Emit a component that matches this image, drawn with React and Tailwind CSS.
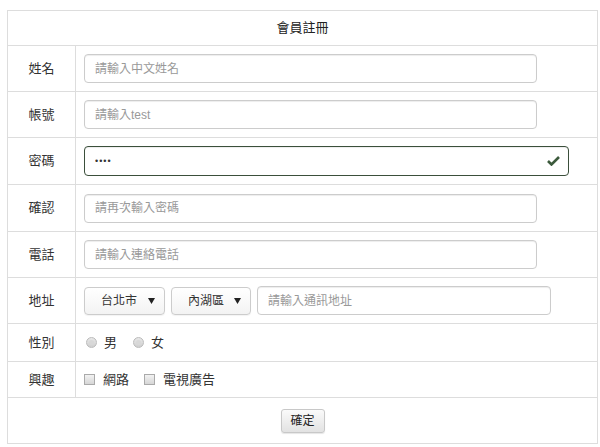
import React from 'react'

const font = { fontFamily: '"Liberation Sans", "Noto Sans CJK TC", sans-serif' }

function Row({ label, h, children }) {
  return (
    <div className={`flex border-b border-[#ddd] ${h}`}>
      <div className="w-[68px] shrink-0 border-r border-[#ddd] flex items-center justify-center text-[13px] text-[#333]">
        {label}
      </div>
      <div className="flex-1 flex items-center pl-[8px]">{children}</div>
    </div>
  )
}

function TextInput({ placeholder, w = 'w-[453px]' }) {
  return (
    <input
      type="text"
      placeholder={placeholder}
      className={`${w} h-[29px] rounded-[4px] border border-[#ccc] bg-white px-[10px] text-[12px] text-[#555] placeholder:text-[#999] shadow-[inset_0_1px_1px_rgba(0,0,0,0.075)] outline-none`}
      style={font}
    />
  )
}

function Select({ value, w }) {
  return (
    <div className={`${w} h-[28px] rounded-[4px] border border-[#ccc] bg-gradient-to-b from-white to-[#f3f3f3] shadow-[0_1px_1px_rgba(0,0,0,0.05)] flex items-center justify-between pl-[16px] pr-[9px] text-[12px] text-[#333]`}>
      <span>{value}</span>
      <svg width="7" height="6" viewBox="0 0 7 6">
        <path d="M0 0 H7 L3.5 6 Z" fill="#222" />
      </svg>
    </div>
  )
}

function Radio({ label }) {
  return (
    <label className="flex items-center gap-[7px] mr-[16px] text-[13px] text-[#333]">
      <span className="w-[11px] h-[11px] rounded-full border border-[#bbb] bg-gradient-to-b from-[#e8e8e8] to-[#cfcfcf] flex items-center justify-center">
        <span className="w-[5px] h-[5px] rounded-full bg-[#d8d8d8]" />
      </span>
      {label}
    </label>
  )
}

function Check({ label }) {
  return (
    <label className="flex items-center gap-[8px] mr-[15px] text-[13px] text-[#333]">
      <span className="w-[11px] h-[11px] border border-[#aaa] bg-gradient-to-b from-[#f2f2f2] to-[#d6d6d6]" />
      {label}
    </label>
  )
}

export default function App() {
  return (
    <div className="w-[600px] h-[447px] bg-white pt-[10px] pl-[7px]" style={font}>
      <div className="w-[591px] border border-[#ddd]">
        <div className="h-[35px] border-b border-[#ddd] flex items-center justify-center text-[13px] text-[#222]">
          會員註冊
        </div>
        <Row label="姓名" h="h-[46px]">
          <TextInput placeholder="請輸入中文姓名" />
        </Row>
        <Row label="帳號" h="h-[46px]">
          <TextInput placeholder="請輸入test" />
        </Row>
        <Row label="密碼" h="h-[47px]">
          <div className="relative w-[485px] h-[30px]">
            <input
              type="password"
              defaultValue="test"
              className="w-full h-full rounded-[4px] border border-[#3b4f3b] bg-white px-[10px] text-[9px] tracking-[1px] text-[#333] shadow-[inset_0_1px_1px_rgba(0,0,0,0.075)] outline-none"
              style={font}
            />
            <svg className="absolute right-[9px] top-[9px]" width="13" height="11" viewBox="0 0 13 11">
              <path d="M1 6 L4.5 9.5 L12 2" fill="none" stroke="#3c5a3c" strokeWidth="2.6" />
            </svg>
          </div>
        </Row>
        <Row label="確認" h="h-[47px]">
          <TextInput placeholder="請再次輸入密碼" />
        </Row>
        <Row label="電話" h="h-[46px]">
          <TextInput placeholder="請輸入連絡電話" />
        </Row>
        <Row label="地址" h="h-[46px]">
          <div className="flex items-center gap-[6px]">
            <Select value="台北市" w="w-[81px]" />
            <Select value="內湖區" w="w-[80px]" />
            <TextInput placeholder="請輸入通訊地址" w="w-[294px]" />
          </div>
        </Row>
        <Row label="性別" h="h-[38px]">
          <div className="flex items-center pl-[2px]">
            <Radio label="男" />
            <Radio label="女" />
          </div>
        </Row>
        <Row label="興趣" h="h-[36px]">
          <div className="flex items-center">
            <Check label="網路" />
            <Check label="電視廣告" />
          </div>
        </Row>
        <div className="h-[45px] flex items-center justify-center">
          <button
            className="w-[44px] h-[24px] rounded-[3px] border border-[#c8c8c8] bg-gradient-to-b from-[#fafafa] to-[#e2e2e2] text-[12px] text-[#222] shadow-[0_1px_1px_rgba(0,0,0,0.1)]"
            style={font}
          >
            確定
          </button>
        </div>
      </div>
    </div>
  )
}
